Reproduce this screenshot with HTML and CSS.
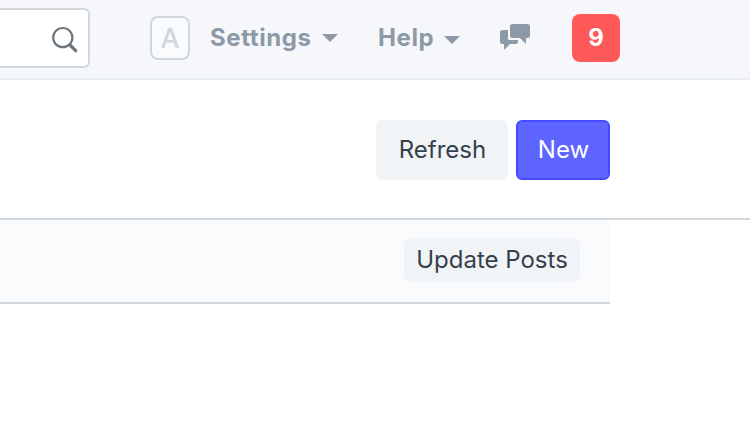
FILE: index.html
```html
<!DOCTYPE html>
<html lang="en">
<head>
<meta charset="utf-8">
<title>Posts</title>
<link rel="stylesheet" href="styles.css">
</head>
<body>
<header class="navbar">
  <div class="search">
    <svg class="search-icon" width="28" height="28" viewBox="0 0 28 28"><circle cx="11.8" cy="11.6" r="9.6" fill="none" stroke="currentColor" stroke-width="2.200"/><path d="M19 19l5.700 5.700" stroke="currentColor" stroke-width="3.2" stroke-linecap="round"/></svg>
  </div>
  <span class="avatar">A</span>
  <a class="menu settings"><span class="label">Settings</span><span class="caret"></span></a>
  <a class="menu help"><span class="label">Help</span><span class="caret"></span></a>
  <svg class="chat" width="30" height="26" viewBox="0 0 30 26" fill="currentColor"><path d="M2.500 6H8v8.500Q8 16 9.500 16H18v1.500Q18 20 15.500 20H10l-6 6v-6H2.500Q0 20 0 17.500v-9Q0 6 2.500 6Z"/><path d="M12.500 0h15Q30 0 30 2.500v9q0 2.500-2.500 2.500H26v6l-6-6h-7.500Q10 14 10 11.500v-9Q10 0 12.500 0Z"/></svg>
  <span class="badge">9</span>
</header>
<section class="page-head">
  <button class="btn refresh">Refresh</button>
  <button class="btn primary">New</button>
</section>
<section class="toolbar">
  <button class="btn small">Update Posts</button>
</section>
</body>
</html>
```
FILE: styles.css
```css
* {
  box-sizing: border-box;
}
body {
  margin: 0;
  background: #fff;
  color: #36414c;
  font: 24px/36px Inter, sans-serif;
}
.navbar {
  display: flex;
  align-items: flex-start;
  height: 80px;
  background: #f5f7fa;
  border-bottom: 2px solid #ebeef1;
  color: #8d99a6;
}
.search {
  display: flex;
  justify-content: flex-end;
  width: 90px;
  height: 60px;
  margin-top: 8px;
  padding: 16px 9px;
  background: #fff;
  border: 2px solid #d1d8dd;
  border-left: 0;
  border-radius: 0 6px 6px 0;
  color: #6c7680;
}
.avatar {
  width: 40px;
  height: 44px;
  margin: 16px 0 0 60px;
  border: 2px solid #d1d8dd;
  border-radius: 8px;
  background: #fafbfc;
  color: #d1d8dd;
  font-size: 27px;
  font-weight: 500;
  line-height: 41px;
  text-align: center;
}
.menu {
  display: flex;
  align-items: flex-start;
  justify-content: space-between;
  margin-top: 20px;
  font-weight: 700;
  letter-spacing: 0.6px;
}
.settings {
  width: 128px;
  margin-left: 20px;
}
.help {
  width: 82px;
  margin-left: 40px;
}
.label {
  white-space: nowrap;
}
.caret {
  margin-top: 14px;
  border: 8px solid transparent;
  border-top-color: currentColor;
  border-bottom: 0;
}
.help .caret {
  margin-top: 16px;
}
.chat {
  margin: 24px 0 0 40px;
}
.badge {
  width: 48px;
  height: 48px;
  margin: 14px 0 0 42px;
  border-radius: 8px;
  background: #ff5858;
  color: #fff;
  font-weight: 700;
  line-height: 48px;
  text-align: center;
}
.page-head {
  display: flex;
  justify-content: flex-end;
  gap: 8px;
  height: 140px;
  padding: 40px 140px 0 0;
  border-bottom: 2px solid #d1d8dd;
}
.btn {
  height: 60px;
  padding: 0;
  border: 0;
  border-radius: 6px;
  background: #f0f4f7;
  color: inherit;
  font: inherit;
}
.refresh {
  width: 132px;
  padding-left: 1px;
}
.primary {
  width: 94px;
  padding-left: 1px;
  background: #5e64ff;
  border: 2px solid #444bff;
  color: #fff;
}
.toolbar {
  display: flex;
  justify-content: flex-end;
  width: 610px;
  height: 84px;
  padding: 18px 30px 0 0;
  background: #fafbfc;
  border-bottom: 2px solid #d1d8dd;
}
.small {
  width: 176px;
  height: 44px;
}
```
